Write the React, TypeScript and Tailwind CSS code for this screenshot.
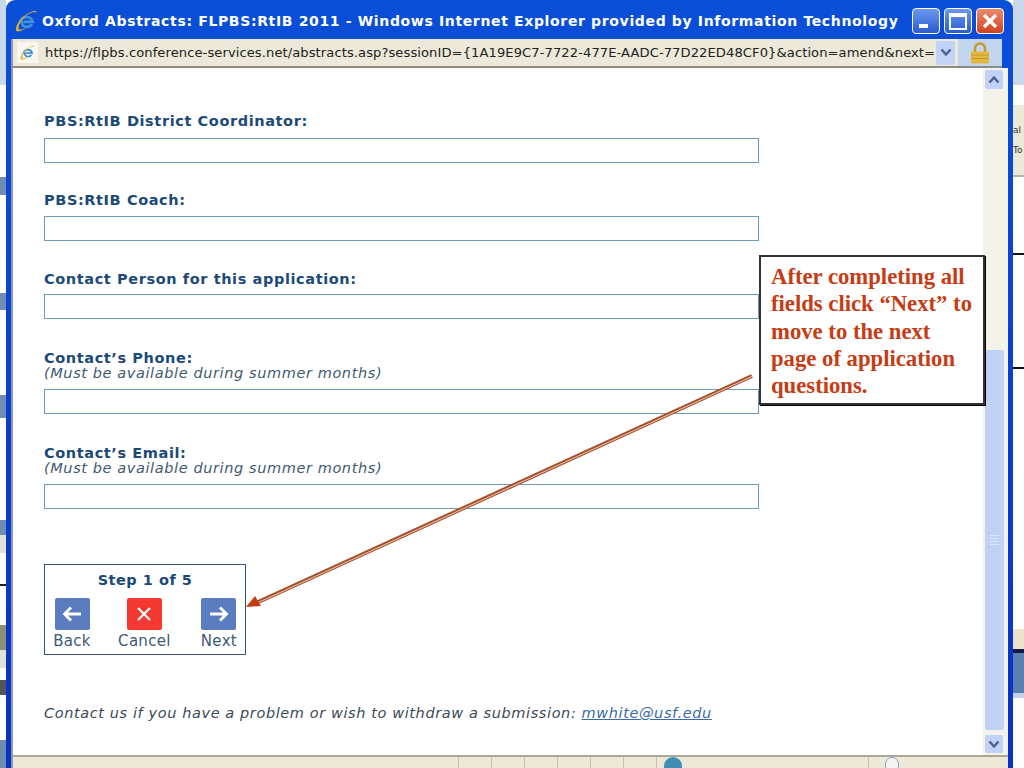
const inputLabel = "text-[14.500px] leading-[16px] font-bold tracking-[0.6px] text-[#1c4a78]";
const hint = "text-[14.500px] leading-[14px] italic tracking-[0.6px] text-[#3f5a70]";
const inputBox = "h-[25px] w-[715px] border border-[#6f9bb5] bg-white";

function IeIcon({ size }: { size: number }) {
  return (
    <svg width={size} height={size} viewBox="0 0 24 24" className="shrink-0">
      <path d="M5.500 14.500a7 7 0 0 1 13.800-1.500H9.500" fill="none" stroke="#3f93dc" strokeWidth="3" />
      <path d="M8 11.500c-1.500 4 1 7 4.500 7 2.500 0 4.500-1 6-3" fill="none" stroke="#3f93dc" strokeWidth="3" />
      <path d="M1.500 23C-1 17 8 5 19 1.500c2.500-.8 4.500-.5 4.500 1.500-1-1.200-4-1-7 .5C9 7 3 15 4 21c2 .8 5 0 8-1.500-3.500 3-8.500 4.500-10.500 3.500z" fill="#e3b02c" />
    </svg>
  );
}

function StepButton({ color, label, children }: { color: string; label: string; children: React.ReactNode }) {
  return (
    <div className="flex flex-col items-center">
      <div className={`flex h-[32px] w-[35px] items-center justify-center rounded-[2px] ${color}`}>
        <svg width="24" height="20" viewBox="0 0 24 20" fill="none" stroke="#fff" strokeWidth="2.800">
          {children}
        </svg>
      </div>
      <span className="mt-[3px] text-[15px] leading-[16px] tracking-[0.3px] text-[#3d5a78]">{label}</span>
    </div>
  );
}

function Field({ label, sub, mt, gap }: { label: string; sub?: string; mt: string; gap: string }) {
  return (
    <div className={mt}>
      <div className={inputLabel}>{label}</div>
      {sub && <div className={hint}>{sub}</div>}
      <div className={`${inputBox} ${gap}`} />
    </div>
  );
}

function WinButton({ kind }: { kind: "min" | "max" | "close" }) {
  const bg = kind === "close" ? "bg-gradient-to-b from-[#e98a6c] to-[#d0401c]" : "bg-gradient-to-b from-[#6d97ee] to-[#2a5bd0]";
  return (
    <div className={`flex h-[26px] w-[28px] items-center justify-center rounded-[4px] border border-white ${bg}`}>
      {kind === "min" && <div className="mt-[10px] mr-[6px] h-[4px] w-[9px] bg-white" />}
      {kind === "max" && <div className="h-[17px] w-[18px] border-[2px] border-t-[4px] border-white" />}
      {kind === "close" && (
        <svg width="18" height="18" viewBox="0 0 18 18" stroke="#fff" strokeWidth="3.200">
          <path d="M3 3l12 12M15 3L3 15" />
        </svg>
      )}
    </div>
  );
}

export default function App() {
  return (
    <div className="relative flex h-[768px] w-[1024px] overflow-hidden bg-white font-['DejaVu_Sans',sans-serif]">
      {/* desktop behind, left sliver */}
      <div className="flex w-[6px] shrink-0 flex-col bg-white">
        <div className="h-[85px] bg-[#c9d8ea]" />
        <div className="mt-[92px] h-[18px] bg-[#6f8db0]" />
        <div className="mt-[98px] h-[17px] bg-[#6f8db0]" />
        <div className="mt-[85px] h-[23px] bg-[#6f8db0]" />
        <div className="mt-[102px] h-[15px] bg-[#6f8db0]" />
        <div className="h-[18px] bg-[#dfe2d6]" />
        <div className="mt-[31px] h-[2px] bg-[#222]" />
        <div className="mt-[39px] h-[25px] bg-[#8d8f76]" />
        <div className="h-[18px] bg-[#dfe2d6]" />
        <div className="mt-[12px] h-[15px] bg-[#555]" />
        <div className="mt-[45px] h-[28px] bg-[#6f8db0]" />
      </div>

      {/* IE window */}
      <div className="flex w-[1007px] shrink-0 flex-col rounded-t-[9px] bg-gradient-to-b from-[#0a4fd8] via-[#0a3fd0] to-[#0733c4] pt-[3px]">
        {/* title bar */}
        <div className="flex h-[36px] items-center pl-[9px] pr-[9px]">
          <IeIcon size={22} />
          <span className="ml-[5px] flex-1 text-[14px] font-bold tracking-[0.65px] whitespace-nowrap text-white">
            Oxford Abstracts: FLPBS:RtIB 2011 - Windows Internet Explorer provided by Information Technology
          </span>
          <div className="flex gap-[4px]">
            <WinButton kind="min" />
            <WinButton kind="max" />
            <WinButton kind="close" />
          </div>
        </div>

        <div className="flex min-h-0 flex-1 flex-col pl-[5px] pr-[5px]">
          <div className="flex min-h-0 flex-1 flex-col border-l-[2px] border-[#8f98a8]">
            {/* address bar */}
            <div className="mr-[6px] flex h-[29px] shrink-0 items-center border-b-[2px] border-[#8d8d85] bg-[#ece9d8] pl-[4px]">
              <div className="flex h-[21px] w-[21px] shrink-0 items-center justify-center bg-[#f7f6ef]">
                <IeIcon size={15} />
              </div>
              <span className="ml-[7px] w-[891px] text-[13.100px] tracking-[0.08px] whitespace-nowrap text-[#222]">
                https://flpbs.conference-services.net/abstracts.asp?sessionID=&#123;1A19E9C7-7722-477E-AADC-77D22ED48CF0&#125;&amp;action=amend&amp;next=
              </span>
              <div className="flex h-[24px] w-[19px] items-center justify-center rounded-[2px] bg-[#c3d3f7]">
                <svg width="12" height="9" viewBox="0 0 12 9" fill="none" stroke="#4a6291" strokeWidth="2.500">
                  <path d="M1.500 1.500L6 6.500l4.500-5" />
                </svg>
              </div>
              <div className="ml-[3px] flex h-[27px] flex-1 items-center justify-center bg-[#c3d4ee]">
                <svg width="20" height="22" viewBox="0 0 20 22">
                  <path d="M5 10V6.500a5 5 0 0 1 10 0V10" fill="none" stroke="#bd9a30" strokeWidth="2.500" />
                  <rect x="1" y="9.500" width="18" height="12" fill="#e3b83e" />
                  <path d="M1 13h18M1 16.500h18" stroke="#c39a2a" />
                </svg>
              </div>
            </div>

            {/* page + scrollbar */}
            <div className="flex min-h-0 flex-1 bg-white">
              <div className="w-[970px] shrink-0 pl-[31px] pt-[45px]">
                <Field label="PBS:RtIB District Coordinator:" mt="mt-0" gap="mt-[9px]" />
                <Field label="PBS:RtIB Coach:" mt="mt-[29px]" gap="mt-[8px]" />
                <Field label="Contact Person for this application:" mt="mt-[30px]" gap="mt-[7px]" />
                <Field label="Contact’s Phone:" sub="(Must be available during summer months)" mt="mt-[31px]" gap="mt-[9px]" />
                <Field label="Contact’s Email:" sub="(Must be available during summer months)" mt="mt-[31px]" gap="mt-[9px]" />

                <div className="mt-[55px] flex h-[91px] w-[202px] flex-col border border-[#33567e] px-[8px] pt-[7px]">
                  <div className="text-center text-[14.500px] leading-[16px] font-bold tracking-[0.5px] text-[#1c4a78]">Step 1 of 5</div>
                  <div className="mt-[10px] flex justify-between">
                    <div className="flex w-[38px] flex-col items-center">
                      <StepButton color="bg-[#5b7dc0]" label="Back">
                        <path d="M21 10H5M11 3.500L4.500 10l6.500 6.500" />
                      </StepButton>
                    </div>
                    <div className="mr-[3px]">
                      <StepButton color="bg-[#f43a30]" label="Cancel">
                        <path d="M6 4l12 12M18 4L6 16" strokeWidth="2.200" />
                      </StepButton>
                    </div>
                    <StepButton color="bg-[#5b7dc0]" label="Next">
                      <path d="M3 10h16M13 3.500l6.500 6.500-6.500 6.500" />
                    </StepButton>
                  </div>
                </div>

                <p className="mt-[50px] text-[14.500px] leading-[16px] italic tracking-[0.6px] whitespace-nowrap text-[#3a4a58]">
                  Contact us if you have a problem or wish to withdraw a submission:{" "}
                  <span className="text-[#3b6aa8] underline">mwhite@usf.edu</span>
                </p>
              </div>

              {/* scrollbar */}
              <div className="flex flex-1 flex-col items-start bg-[#f4f3ea] pt-[2px] pb-[2px] pl-[2px]">
                <div className="flex h-[19px] w-[18px] items-center justify-center rounded-[2px] bg-[#c3d3f7]">
                  <svg width="12" height="9" viewBox="0 0 12 9" fill="none" stroke="#4a6291" strokeWidth="2.500">
                    <path d="M1.500 7.500L6 2.500l4.500 5" />
                  </svg>
                </div>
                <div className="mt-[261px] flex h-[380px] w-[19px] items-center justify-center rounded-[2px] bg-[#c0d1f6]">
                  <div className="flex w-[9px] flex-col gap-[2px]">
                    <div className="h-px bg-[#dfe7fb]" />
                    <div className="h-px bg-[#dfe7fb]" />
                    <div className="h-px bg-[#dfe7fb]" />
                    <div className="h-px bg-[#dfe7fb]" />
                  </div>
                </div>
                <div className="mt-[5px] flex h-[18px] w-[18px] items-center justify-center rounded-[2px] bg-[#c3d3f7]">
                  <svg width="12" height="9" viewBox="0 0 12 9" fill="none" stroke="#4a6291" strokeWidth="2.500">
                    <path d="M1.500 1.500L6 6.500l4.500-5" />
                  </svg>
                </div>
              </div>
            </div>

            {/* status bar */}
            <div className="flex h-[13px] shrink-0 border-t-[2px] border-[#aca899] bg-[#ece9d8]">
              <div className="w-[446px] border-r border-[#c5c2b2]" />
              {[0, 1, 2, 3, 4, 5].map((i) => (
                <div key={i} className="w-[33px] border-r border-[#c5c2b2]" />
              ))}
              <div className="w-[212px] overflow-hidden border-r border-[#c5c2b2] pl-[7px]">
                <div className="h-[18px] w-[18px] rounded-full bg-[#3f8fb5]" />
              </div>
              <div className="overflow-hidden pl-[16px]">
                <div className="h-[16px] w-[14px] rounded-full border border-[#8c9cc0] bg-[#f4f4f4]" />
              </div>
            </div>
          </div>
        </div>
      </div>

      {/* desktop behind, right sliver */}
      <div className="flex flex-1 flex-col bg-white">
        <div className="h-[85px] bg-[#c9d8ea]" />
        <div className="mt-[20px] flex h-[72px] flex-col justify-center gap-[8px] border-b-[2px] border-[#b5b5b0] bg-[#ece9d8] text-[9px] leading-[12px] text-[#333]">
          <span>al</span>
          <span>To</span>
        </div>
        <div className="mt-[76px] h-[2px] bg-[#111]" />
        <div className="mt-[112px] h-[2px] bg-[#111]" />
        <div className="mt-[260px] h-[20px] bg-[#eee3cf]" />
        <div className="h-[4px] bg-[#111a40]" />
        <div className="h-[40px] bg-[#5b7fb0]" />
        <div className="h-[5px] bg-[#c5d2ec]" />
      </div>

      {/* slide annotation */}
      <div className="absolute left-[759px] top-[255px] h-[150px] w-[226px] border-[2px] border-[#333] bg-white pl-[10px] pt-[6px] font-['Liberation_Serif',serif] text-[22.700px] leading-[27.300px] font-bold whitespace-nowrap text-[#c63c14] shadow-[1px_1px_0_#000]">
        After completing all
        <br />
        fields click “Next” to
        <br />
        move to the next
        <br />
        page of application
        <br />
        questions.
      </div>

      <svg className="pointer-events-none absolute left-0 top-0" width="1024" height="768">
        <path d="M752 376L254 604" stroke="#a5502f" strokeWidth="4" />
        <path d="M752 376.500L254 604.500" stroke="#ecccb8" strokeWidth="1" />
        <path d="M246 607l9-11 6 10z" fill="#c23c14" />
      </svg>
    </div>
  );
}
